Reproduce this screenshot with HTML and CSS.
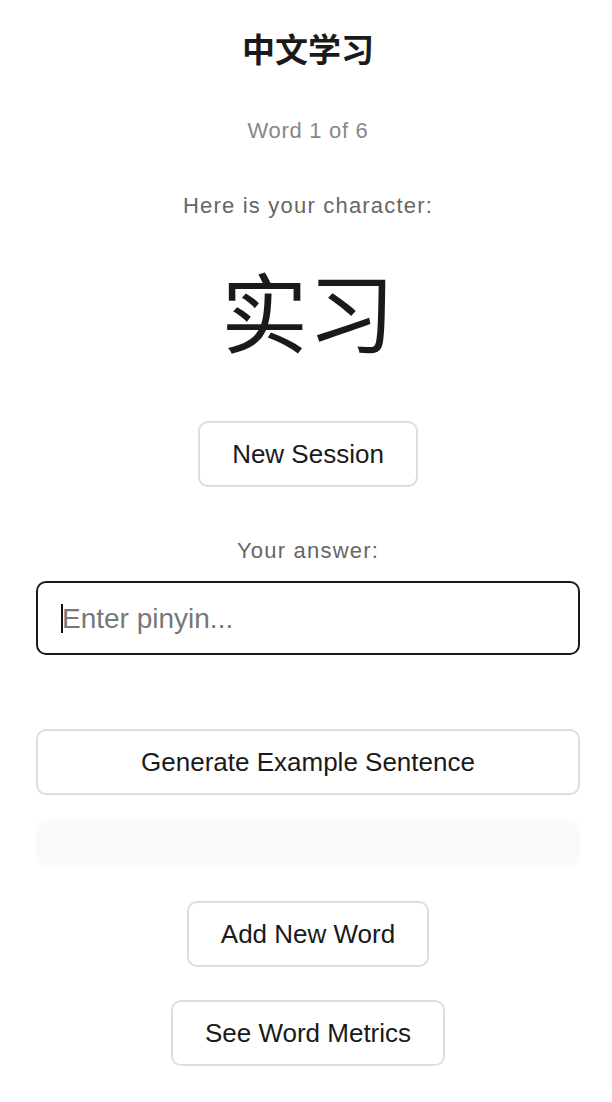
FILE: index.html
```html
<!DOCTYPE html>
<html lang="zh">
<head>
<meta charset="utf-8">
<title>中文学习</title>
<link rel="stylesheet" href="styles.css">
</head>
<body>
<main class="app">
  <h1 class="title">中文学习</h1>
  <p class="progress">Word 1 of 6</p>
  <p class="label prompt">Here is your character:</p>
  <div class="character">实习</div>
  <button class="btn btn-session" type="button">New Session</button>
  <label class="label answer-label" for="answer">Your answer:</label>
  <div class="input-wrap">
    <input id="answer" class="answer-input" type="text" placeholder="Enter pinyin...">
    <span class="caret"></span>
  </div>
  <button class="btn btn-wide btn-generate" type="button">Generate Example Sentence</button>
  <div class="sentence-box"></div>
  <button class="btn btn-add" type="button">Add New Word</button>
  <button class="btn btn-metrics" type="button">See Word Metrics</button>
</main>
</body>
</html>
```
FILE: styles.css
```css
* { box-sizing: border-box; }

html, body {
  margin: 0;
  padding: 0;
  background: #ffffff;
}

body {
  font-family: "Liberation Sans", Arial, "Noto Sans CJK SC", sans-serif;
  color: #1a1a1a;
}

.app {
  display: flex;
  flex-direction: column;
  align-items: center;
  padding: 0 32px 0 36px;
}

.title {
  margin: 28px 0 0;
  font-family: "Noto Sans CJK SC", sans-serif;
  font-size: 33px;
  font-weight: 700;
  line-height: 40px;
  color: #1a1a1a;
}

.progress {
  margin: 51px 0 0;
  font-size: 22px;
  line-height: 24px;
  letter-spacing: 0.7px;
  color: #888888;
}

.label {
  font-size: 22px;
  line-height: 24px;
  letter-spacing: 1.2px;
  color: #666666;
}

.prompt {
  margin: 51px 0 0;
}

.character {
  margin-top: 41px;
  font-family: "Noto Sans CJK SC", sans-serif;
  font-size: 87px;
  line-height: 100px;
  color: #1a1a1a;
}

.btn {
  font-family: "Liberation Sans", Arial, sans-serif;
  font-size: 26px;
  line-height: 30px;
  color: #1a1a1a;
  background: #ffffff;
  border: 2px solid #dddddd;
  border-radius: 10px;
  padding: 16px 32px;
  cursor: pointer;
}

.btn-session { margin-top: 62px; }

.answer-label {
  display: block;
  margin-top: 52px;
}

.input-wrap {
  position: relative;
  margin-top: 18px;
  width: 100%;
}

.answer-input {
  display: block;
  width: 100%;
  height: 74px;
  border: 2px solid #1a1a1a;
  border-radius: 10px;
  padding: 2px 24px 0;
  font-family: "Liberation Sans", Arial, sans-serif;
  font-size: 28px;
  color: #1a1a1a;
  outline: none;
  background: #ffffff;
}

.answer-input::placeholder { color: #777777; }

.caret {
  position: absolute;
  left: 25px;
  top: 23px;
  width: 2px;
  height: 29px;
  background: #111111;
}

.btn-wide { width: 100%; }

.btn-generate { margin-top: 74px; }

.sentence-box {
  margin-top: 25px;
  width: 100%;
  height: 47px;
  background: #fafafa;
  border-radius: 10px;
}

.btn-add { margin-top: 34px; }

.btn-metrics { margin-top: 33px; }
```
